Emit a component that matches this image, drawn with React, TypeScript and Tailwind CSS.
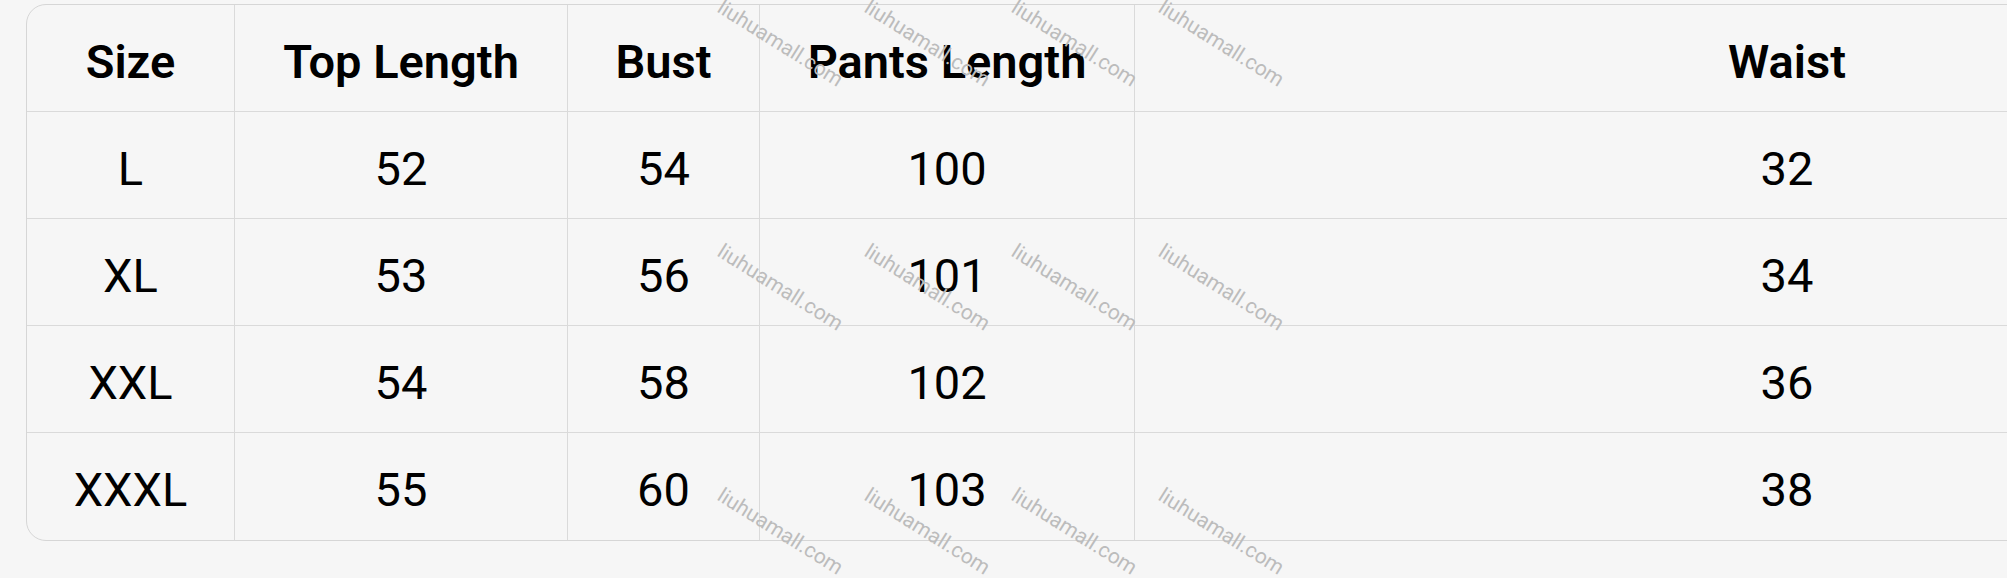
const columns = [
  { label: 'Size', width: 'w-[208px]' },
  { label: 'Top Length', width: 'w-[333px]' },
  { label: 'Bust', width: 'w-[192px]' },
  { label: 'Pants Length', width: 'w-[375px]' },
  { label: 'Waist', width: 'w-[1304px]' },
]

const rows = [
  ['L', '52', '54', '100', '32'],
  ['XL', '53', '56', '101', '34'],
  ['XXL', '54', '58', '102', '36'],
  ['XXXL', '55', '60', '103', '38'],
]

const marksX = [780, 927, 1074, 1221]
const marksY = [44, 288, 532]

function Cell({ text, width, bold, last, bottom }: { text: string; width: string; bold?: boolean; last: boolean; bottom: boolean }) {
  return (
    <div
      className={`${width} shrink-0 h-[107px] pt-[8px] flex items-center justify-center border-[#dadada] ${last ? '' : 'border-r'} ${bottom ? '' : 'border-b'} ${bold ? 'font-semibold' : 'font-normal'} text-[47px] text-black`}
    >
      {text}
    </div>
  )
}

export default function App() {
  return (
    <div className="relative w-[2007px] h-[578px] overflow-hidden bg-[#f6f6f6] font-['Roboto','Liberation_Sans',sans-serif]">
      <div className="ml-[26px] mt-[4px] w-[2420px] border border-[#d6d6d6] rounded-[20px] overflow-hidden">
        {/* header */}
        <div className="flex">
          {columns.map((c, i) => (
            <Cell key={c.label} text={c.label} width={c.width} bold last={i === columns.length - 1} bottom={false} />
          ))}
        </div>
        {rows.map((r, ri) => (
          <div key={r[0]} className="flex">
            {r.map((v, i) => (
              <Cell
                key={i}
                text={v}
                width={columns[i].width}
                last={i === r.length - 1}
                bottom={ri === rows.length - 1}
              />
            ))}
          </div>
        ))}
      </div>

      {/* watermarks */}
      {marksY.map((y) =>
        marksX.map((x) => (
          <span
            key={`${x}-${y}`}
            className="absolute pointer-events-none text-[21px] text-[#bcbcbc] whitespace-nowrap rotate-[32deg] -translate-x-1/2 -translate-y-1/2"
            style={{ left: x, top: y }}
          >
            liuhuamall.com
          </span>
        ))
      )}
    </div>
  )
}
